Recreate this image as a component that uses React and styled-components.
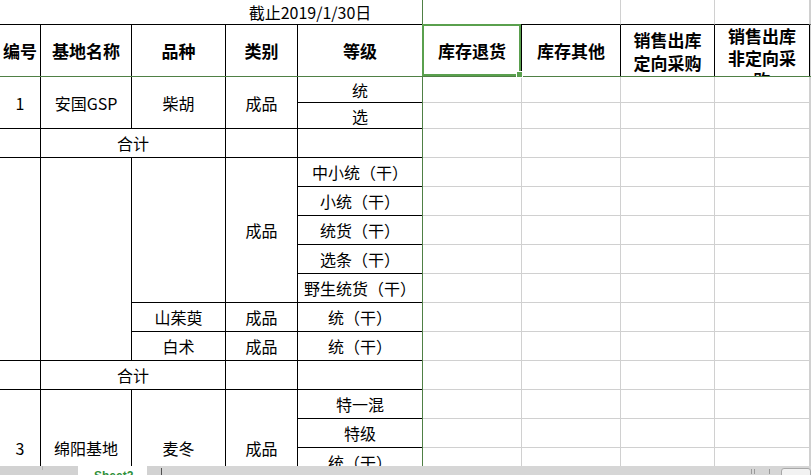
import React from 'react';
import styled, { createGlobalStyle } from 'styled-components';

const GlobalStyle = createGlobalStyle`
  html, body { margin: 0; padding: 0; background: #fff; }
  body { font-family: "Noto Sans CJK SC", "Noto Sans", sans-serif; }
`;

const GRID_LINE = '#d0d0d0';
const FREEZE = '#4f8045';
const SELECT = '#5aa04e';

const Window = styled.div`
  width: 811px;
  height: 475px;
  display: flex;
  flex-direction: column;
  overflow: hidden;
  background: #fff;
`;

const Sheet = styled.div`
  position: relative;
  flex: 1;
  overflow: hidden;
`;

const Grid = styled.div`
  display: grid;
  grid-template-columns: 41px 91px 94px 72px 125px 99px 99px 94px 95px 1fr;
  grid-template-rows: 25px 52px 26px 26px repeat(13, 29px);
`;

const place = (p) => `
  grid-column: ${p.$c} / span ${p.$cs || 1};
  grid-row: ${p.$r} / span ${p.$rs || 1};
`;

const TitleCell = styled.div`
  ${place}
  box-sizing: border-box;
  border-right: 1px solid ${GRID_LINE};
  border-bottom: 1px solid #000;
  display: flex;
  align-items: center;
  justify-content: center;
  font-size: 16px;
  line-height: 1;
  color: #000;
  white-space: nowrap;
`;

const HeaderCell = styled.div`
  ${place}
  position: relative;
  box-sizing: border-box;
  border-right: 1px solid #000;
  border-bottom: 1px solid #000;
  display: flex;
  align-items: ${(p) => (p.$top ? 'flex-start' : 'center')};
  justify-content: center;
  font-size: 17px;
  font-weight: 700;
  line-height: ${(p) => p.$lh || 1};
  text-align: center;
  color: #000;
  white-space: nowrap;
  overflow: ${(p) => (p.$clip ? 'hidden' : 'visible')};
`;

const DataCell = styled.div`
  ${place}
  box-sizing: border-box;
  border-right: 1px solid #000;
  border-bottom: 1px solid #000;
  display: flex;
  align-items: center;
  justify-content: center;
  font-size: 16px;
  line-height: 1;
  color: #000;
  white-space: nowrap;
  background: #fff;
`;

const GridCell = styled.div`
  ${place}
  box-sizing: border-box;
  border-right: 1px solid ${GRID_LINE};
  border-bottom: 1px solid ${(p) => (p.$dark ? '#000' : GRID_LINE)};
`;

const FreezeV = styled.div`
  position: absolute;
  top: 0;
  bottom: 0;
  left: 422px;
  width: 1px;
  background: ${FREEZE};
  pointer-events: none;
`;

const FreezeH = styled.div`
  position: absolute;
  left: 0;
  right: 0;
  top: 76px;
  height: 1px;
  background: ${FREEZE};
  pointer-events: none;
`;

const Selection = styled.div`
  position: absolute;
  top: -1px;
  left: -1px;
  width: calc(100% + 1px);
  height: calc(100% + 1px);
  box-sizing: border-box;
  border: 2px solid ${SELECT};
  z-index: 2;
  pointer-events: none;
`;

const Handle = styled.div`
  position: absolute;
  right: -4px;
  bottom: -4px;
  width: 5px;
  height: 5px;
  background: ${SELECT};
  border: 1px solid #fff;
`;

const TabBar = styled.div`
  flex: none;
  height: 9px;
  background: #d6d6d6;
  display: flex;
  align-items: flex-start;
  overflow: hidden;
`;

const NavArea = styled.div`
  width: 78px;
  height: 100%;
  flex: none;
  background: #d2d2d2;
  position: relative;
`;

const NavTick = styled.div`
  margin-left: 42px;
  width: 1px;
  height: 4px;
  background: #b4b4b4;
`;

const Tab = styled.div`
  flex: none;
  width: 69px;
  height: 100%;
  background: #fff;
  box-sizing: border-box;
  padding: 3px 0 0 16px;
  font-family: "Liberation Sans", Arial, sans-serif;
  font-size: 12px;
  font-weight: 700;
  line-height: 14px;
  color: #2f8f3a;
`;

const TabGap = styled.div`
  flex: none;
  width: 14px;
  height: 100%;
  background: #d2d2d2;
`;

const Divider = styled.div`
  flex: none;
  width: 1px;
  height: 7px;
  margin-top: 2px;
  background: #505050;
`;

const Spacer = styled.div`
  flex: 1;
`;

const ScrollMark = styled.div`
  flex: none;
  width: 1px;
  height: 5px;
  margin: 3px ${(p) => p.$gap || 2}px 0 0;
  background: #9a9a9a;
`;

const ScrollThumb = styled.div`
  flex: none;
  width: 30px;
  height: 12px;
  margin-top: 2px;
  box-sizing: border-box;
  border: 1px solid #a8a8a8;
  border-radius: 3px;
  background: #f2f2f2;
`;

const headers = [
  { c: 1, t: '编号' },
  { c: 2, t: '基地名称' },
  { c: 3, t: '品种' },
  { c: 4, t: '类别' },
  { c: 5, t: '等级' },
];

const grades2 = ['中小统（干）', '小统（干）', '统货（干）', '选条（干）', '野生统货（干）', '统（干）', '统（干）'];

export default function App() {
  const gridCells = [];
  for (let r = 3; r <= 17; r += 1) {
    for (let c = 6; c <= 10; c += 1) {
      gridCells.push(<GridCell key={`g-${r}-${c}`} $r={r} $c={c} />);
    }
  }

  return (
    <Window>
      <GlobalStyle />
      <Sheet>
        <Grid>
          <TitleCell $r={1} $c={1} $cs={7}>截止2019/1/30日</TitleCell>
          <GridCell $r={1} $c={8} $dark />
          <GridCell $r={1} $c={9} $dark />
          <GridCell $r={1} $c={10} $dark />

          {headers.map((h) => (
            <HeaderCell key={h.c} $r={2} $c={h.c}>{h.t}</HeaderCell>
          ))}
          <HeaderCell $r={2} $c={6}>
            库存退货
            <Selection>
              <Handle />
            </Selection>
          </HeaderCell>
          <HeaderCell $r={2} $c={7}>库存其他</HeaderCell>
          <HeaderCell $r={2} $c={8} $lh="23px">
            销售出库<br />定向采购
          </HeaderCell>
          <HeaderCell $r={2} $c={9} $lh="22px" $top $clip>
            销售出库<br />非定向采<br />购
          </HeaderCell>
          <GridCell $r={2} $c={10} />

          <DataCell $r={3} $rs={2} $c={1}>1</DataCell>
          <DataCell $r={3} $rs={2} $c={2}>安国GSP</DataCell>
          <DataCell $r={3} $rs={2} $c={3}>柴胡</DataCell>
          <DataCell $r={3} $rs={2} $c={4}>成品</DataCell>
          <DataCell $r={3} $c={5}>统</DataCell>
          <DataCell $r={4} $c={5}>选</DataCell>

          <DataCell $r={5} $c={1} />
          <DataCell $r={5} $c={2} $cs={2}>合计</DataCell>
          <DataCell $r={5} $c={4} />
          <DataCell $r={5} $c={5} />

          <DataCell $r={6} $rs={7} $c={1} />
          <DataCell $r={6} $rs={7} $c={2} />
          <DataCell $r={6} $rs={5} $c={3} />
          <DataCell $r={11} $c={3}>山茱萸</DataCell>
          <DataCell $r={12} $c={3}>白术</DataCell>
          <DataCell $r={6} $rs={5} $c={4}>成品</DataCell>
          <DataCell $r={11} $c={4}>成品</DataCell>
          <DataCell $r={12} $c={4}>成品</DataCell>
          {grades2.map((g, i) => (
            <DataCell key={`g2-${i}`} $r={6 + i} $c={5}>{g}</DataCell>
          ))}

          <DataCell $r={13} $c={1} />
          <DataCell $r={13} $c={2} $cs={2}>合计</DataCell>
          <DataCell $r={13} $c={4} />
          <DataCell $r={13} $c={5} />

          <DataCell $r={14} $rs={4} $c={1}>3</DataCell>
          <DataCell $r={14} $rs={4} $c={2}>绵阳基地</DataCell>
          <DataCell $r={14} $rs={4} $c={3}>麦冬</DataCell>
          <DataCell $r={14} $rs={4} $c={4}>成品</DataCell>
          <DataCell $r={14} $c={5}>特一混</DataCell>
          <DataCell $r={15} $c={5}>特级</DataCell>
          <DataCell $r={16} $c={5}>统（干）</DataCell>
          <DataCell $r={17} $c={5} />

          {gridCells}
        </Grid>
        <FreezeV />
        <FreezeH />
      </Sheet>
      <TabBar>
        <NavArea>
          <NavTick />
        </NavArea>
        <Tab>Sheet2</Tab>
        <TabGap />
        <Divider />
        <Spacer />
        <ScrollMark $gap={2} />
        <ScrollMark $gap={14} />
        <ScrollMark $gap={11} />
        <ScrollThumb />
      </TabBar>
    </Window>
  );
}
